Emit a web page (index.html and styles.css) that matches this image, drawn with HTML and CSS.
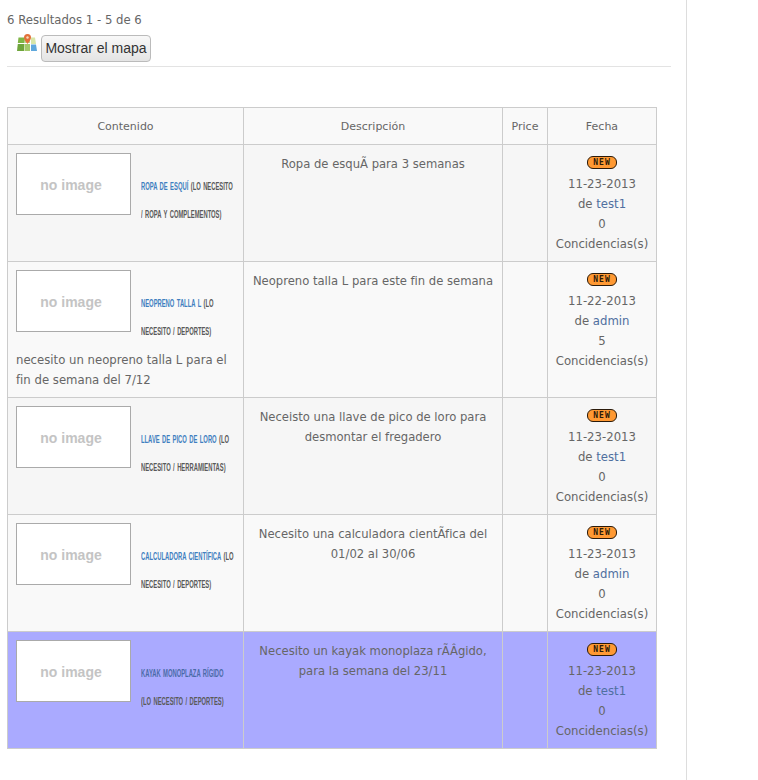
FILE: index.html
```html
<!DOCTYPE html>
<html lang="es">
<head>
<meta charset="utf-8">
<title>Resultados</title>
<link rel="stylesheet" href="styles.css">
</head>
<body>
<main class="page">
  <p class="count">6 Resultados 1 - 5 de 6</p>
  <div class="map-bar">
    <svg class="map-icon" width="20" height="18" viewBox="0 0 20 18" aria-hidden="true">
      <path d="M1.500 3.500H8L7.500 9H.8z" fill="#7fb545"/>
      <path d="M.8 10h6.700l-.5 7H0z" fill="#6fa53c"/>
      <path d="M8.500 3.500H13V9H8z" fill="#b8d98a"/>
      <path d="M8 10h5v7H7.500z" fill="#a3c96b"/>
      <path d="M14 3.500h4l1 6.500h-5z" fill="#d8e6a8"/>
      <path d="M14 10.500h5l1 6.500h-6z" fill="#5fa8dc"/>
      <path d="M10.500 0a3.500 3.500 0 0 1 3.500 3.500c0 2.500-3.500 6.500-3.500 6.500S7 6 7 3.500A3.500 3.500 0 0 1 10.500 0z" fill="#e2703a"/>
      <circle cx="10.500" cy="3.500" r="1.200" fill="#f8d9b8"/>
    </svg>
    <button class="map-button" type="button">Mostrar el mapa</button>
  </div>
  <hr class="rule">
  <table class="results">
    <thead>
      <tr>
        <th class="col-content">Contenido</th>
        <th class="col-desc">Descripción</th>
        <th class="col-price">Price</th>
        <th class="col-date">Fecha</th>
      </tr>
    </thead>
    <tbody>
      <tr class="odd">
        <td>
          <div class="thumb">no image</div>
          <div class="title">
            <span class="line"><a href="#">Ropa de esquí</a> <span class="cat">(Lo necesito</span></span>
            <span class="line cat">/ Ropa y complementos)</span>
          </div>
        </td>
        <td class="desc">Ropa de esquÃ para 3 semanas</td>
        <td></td>
        <td class="date"><span class="new">NEW</span><br>11-23-2013<br>de <a href="#">test1</a><br>0<br>Concidencias(s)</td>
      </tr>
      <tr class="even">
        <td>
          <div class="thumb">no image</div>
          <div class="title">
            <span class="line"><a href="#">Neopreno talla L</a> <span class="cat">(Lo</span></span>
            <span class="line cat">necesito / Deportes)</span>
          </div>
          <p class="note">necesito un neopreno talla L para el fin de semana del 7/12</p>
        </td>
        <td class="desc">Neopreno talla L para este fin de semana</td>
        <td></td>
        <td class="date"><span class="new">NEW</span><br>11-22-2013<br>de <a href="#">admin</a><br>5<br>Concidencias(s)</td>
      </tr>
      <tr class="odd">
        <td>
          <div class="thumb">no image</div>
          <div class="title">
            <span class="line"><a href="#">Llave de pico de loro</a> <span class="cat">(Lo</span></span>
            <span class="line cat">necesito / Herramientas)</span>
          </div>
        </td>
        <td class="desc">Neceisto una llave de pico de loro para desmontar el fregadero</td>
        <td></td>
        <td class="date"><span class="new">NEW</span><br>11-23-2013<br>de <a href="#">test1</a><br>0<br>Concidencias(s)</td>
      </tr>
      <tr class="even">
        <td>
          <div class="thumb">no image</div>
          <div class="title">
            <span class="line"><a href="#">Calculadora científica</a> <span class="cat">(Lo</span></span>
            <span class="line cat">necesito / Deportes)</span>
          </div>
        </td>
        <td class="desc">Necesito una calculadora cientÃ­fica del 01/02 al 30/06</td>
        <td></td>
        <td class="date"><span class="new">NEW</span><br>11-23-2013<br>de <a href="#">admin</a><br>0<br>Concidencias(s)</td>
      </tr>
      <tr class="featured">
        <td>
          <div class="thumb">no image</div>
          <div class="title">
            <span class="line"><a href="#">Kayak monoplaza rígido</a></span>
            <span class="line cat">(Lo necesito / Deportes)</span>
          </div>
        </td>
        <td class="desc">Necesito un kayak monoplaza rÃÂ­gido, para la semana del 23/11</td>
        <td></td>
        <td class="date"><span class="new">NEW</span><br>11-23-2013<br>de <a href="#">test1</a><br>0<br>Concidencias(s)</td>
      </tr>
    </tbody>
  </table>
</main>
</body>
</html>
```
FILE: styles.css
```css
* {
  box-sizing: border-box;
}

html,
body {
  height: 100%;
}

body {
  margin: 0;
  background: #fff;
  color: #666;
  font-family: "DejaVu Sans", sans-serif;
  font-size: 11.7px;
  line-height: 20px;
}

a {
  color: #4f6f9f;
  text-decoration: none;
}

.page {
  width: 687px;
  min-height: 100%;
  padding: 10px 0 0 7px;
  border-right: 1px solid #ddd;
}

.count {
  margin: 0;
  line-height: 20px;
}

.map-bar {
  display: flex;
  align-items: flex-start;
  height: 32px;
  padding: 5px 0 0 10px;
  gap: 4px;
}

.map-icon {
  flex: none;
  margin-top: -1px;
}

.map-button {
  width: 110px;
  height: 27px;
  padding: 0 0 2px;
  border: 1px solid #bbb;
  border-radius: 4px;
  background: linear-gradient(#f8f8f8, #e4e4e4);
  color: #333;
  font-family: "Liberation Sans", sans-serif;
  font-size: 14px;
}

.rule {
  width: 664px;
  height: 1px;
  margin: 4px 0 40px;
  border: 0;
  background: #e3e3e3;
}

.results {
  width: 649px;
  table-layout: fixed;
  border-collapse: collapse;
}

.results th,
.results td {
  border: 1px solid #ccc;
  vertical-align: top;
}

.results th {
  height: 37px;
  padding: 2px 0 0;
  background: #f9f9f9;
  font-size: 11px;
  font-weight: normal;
  vertical-align: middle;
}

.col-content {
  width: 236px;
}

.col-desc {
  width: 259px;
}

.col-price {
  width: 45px;
}

.col-date {
  width: 109px;
}

.results td {
  padding: 8px 8px 7px;
}

.results td.desc,
.results td.date {
  padding: 9px 2px 7px;
  text-align: center;
}

.results td.desc {
  font-size: 11.6px;
}

.results td.date {
  padding-left: 0;
  padding-right: 0;
}

.odd td {
  background: #f6f6f6;
}

.even td {
  background: #f9f9f9;
}

.featured td {
  background: #aaf;
}

.thumb {
  float: left;
  width: 115px;
  height: 62px;
  padding-right: 5px;
  border: 1px solid #aaa;
  background: #fff;
  color: #c4c4c4;
  font-family: "Liberation Sans", sans-serif;
  font-size: 14px;
  font-weight: bold;
  line-height: 62px;
  text-align: center;
}

.title {
  margin-left: 125px;
  padding-top: 19px;
  font-family: "Liberation Sans", sans-serif;
  font-size: 11px;
  font-weight: bold;
  line-height: 28px;
  text-transform: uppercase;
  word-spacing: 1.5px;
}

.line {
  display: block;
  white-space: nowrap;
  transform: scaleX(0.53);
  transform-origin: left center;
}

.title a {
  color: #3f7fc0;
}

.cat {
  color: #5a5a5a;
}

.featured .title a {
  color: #4a6aa8;
}

.note {
  clear: both;
  margin: 5px 0 0;
}

.new {
  display: inline-block;
  width: 30px;
  height: 13px;
  margin-top: 2px;
  border: 1px solid #2a1a0a;
  border-radius: 6px;
  background: #ff9933;
  color: #2a1a0a;
  font-family: "DejaVu Sans Mono", monospace;
  font-size: 8px;
  font-weight: bold;
  letter-spacing: 1px;
  line-height: 11px;
  vertical-align: top;
}
```
